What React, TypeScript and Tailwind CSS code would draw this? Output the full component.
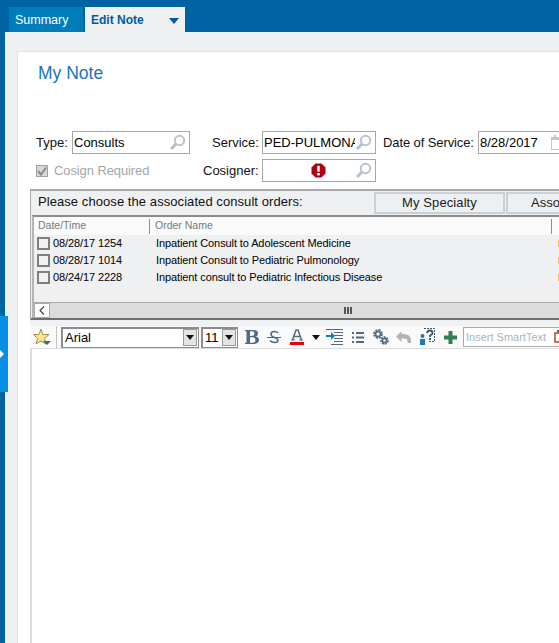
import React from "react";

const Mag = () => (
  <svg width="17" height="17" viewBox="0 0 17 17" className="shrink-0">
    <circle cx="10.5" cy="6.5" r="4.7" fill="none" stroke="#b9c4cc" strokeWidth="2" />
    <path d="M7 10 L2 15" stroke="#b4c0c9" strokeWidth="3" />
  </svg>
);

const Field = ({ w, text, icon, children }: { w: string; text?: string; icon?: boolean; children?: React.ReactNode }) => (
  <div className={`${w} h-[23px] border border-[#a8a8a8] bg-white flex items-center pl-px pr-[3px] shrink-0 overflow-hidden`}>
    <span className="flex-1 min-w-0 overflow-hidden whitespace-nowrap text-[13px] text-black">{text}</span>
    {children}
    {icon && <Mag />}
  </div>
);

const Arrow = () => (
  <div className="w-[14px] h-[17px] ml-auto mr-[1px] shrink-0 bg-[#e4e4e4] border border-[#9a9a9a] flex items-center justify-center">
    <svg width="8" height="5" viewBox="0 0 8 5"><path d="M0 0H8L4 5Z" fill="#111" /></svg>
  </div>
);

const rows = [
  ["08/28/17 1254", "Inpatient Consult to Adolescent Medicine"],
  ["08/28/17 1014", "Inpatient Consult to Pediatric Pulmonology"],
  ["08/24/17 2228", "Inpatient consult to Pediatric Infectious Disease"],
];

export default function App() {
  return (
    <div className="w-[559px] h-[643px] overflow-hidden relative bg-[#0063a3] flex flex-col font-['Liberation_Sans',Arial,sans-serif]">
      <div className="h-8 shrink-0 pt-[7px] pl-[9px] flex">
        <div className="w-[74px] bg-[#007cba] text-white text-[12.5px] leading-[15px] pl-[6px] pt-[6px]">Summary</div>
        <div className="w-[100px] ml-[2px] bg-[#eff0f2] text-[#005c99] text-[12px] leading-[15px] font-bold pl-[6px] pt-[6px] flex items-start">
          <span>Edit Note</span>
          <svg width="10" height="6" viewBox="0 0 10 6" className="ml-[25px] mt-[5px]"><path d="M0 0H10L5 6Z" fill="#005c99" /></svg>
        </div>
      </div>

      <div className="flex-1 ml-[5px] bg-[#eff0f2] pt-[19px] pl-[12px] min-h-0">
        <div className="h-[700px] w-[600px] bg-white border-t border-l border-[#e2e2e2]">
          <div className="pl-5 pt-[11px] h-[79px] text-[17.5px] leading-5 text-[#1a73b8]">My Note</div>

          <div className="flex items-center h-[23px] text-[13px] text-[#111]">
            <span className="ml-[18px] w-[36px] shrink-0">Type:</span>
            <Field w="w-[118px]" text="Consults" icon />
            <span className="ml-[22px] w-[50px] shrink-0">Service:</span>
            <Field w="w-[114px]" text="PED-PULMONARY" icon />
            <span className="ml-[7px] w-[95px] shrink-0 whitespace-nowrap tracking-[-0.1px]">Date of Service:</span>
            <Field w="w-[92px]" text="8/28/2017">
              <svg width="16" height="16" viewBox="0 0 16 16" className="shrink-0">
                <rect x="1.5" y="2.5" width="13" height="12" fill="none" stroke="#bfc8cf" />
                <rect x="1" y="2" width="14" height="3" fill="#bfc8cf" />
                <rect x="4" y="0" width="2" height="3" fill="#bfc8cf" />
                <rect x="10" y="0" width="2" height="3" fill="#bfc8cf" />
              </svg>
            </Field>
          </div>

          <div className="flex items-center h-[23px] mt-[5px] text-[13px]">
            <div className="ml-[18px] w-[12px] h-[12px] bg-[#d8d8d8] border border-[#a0a0a0] flex items-center justify-center shrink-0">
              <svg width="10" height="10" viewBox="0 0 10 10"><path d="M1 5 L4 8.5 L9 1.5" fill="none" stroke="#8a8a8a" strokeWidth="2" /></svg>
            </div>
            <span className="ml-[6px] w-[149px] shrink-0 text-[#a6a6a6] tracking-[-0.1px]">Cosign Required</span>
            <span className="w-[59px] shrink-0 text-[#111]">Cosigner:</span>
            <Field w="w-[114px]" icon>
              <svg width="15" height="15" viewBox="0 0 15 15" className="shrink-0 mr-[29px]">
                <path d="M4.5 0.5H10.5L14.5 4.5V10.5L10.5 14.5H4.5L0.5 10.5V4.5Z" fill="#b00012" />
                <rect x="6.2" y="2.8" width="2.6" height="6" rx="1" fill="#fff" />
                <rect x="6.2" y="10" width="2.6" height="2.4" fill="#fff" />
              </svg>
            </Field>
          </div>

          <div className="mt-[7px] ml-3 border-t-2 border-l border-[#a9a9a9] bg-[#eff0f2] overflow-hidden">
            <div className="h-[24px] pt-px flex items-start text-[13px] text-[#111]">
              <span className="ml-[7px] w-[336px] shrink-0 leading-[20px] tracking-[0.07px] whitespace-nowrap">Please choose the associated consult orders:</span>
              <div className="w-[131px] h-[22px] shrink-0 border-2 border-[#c9d0d6] bg-[#ecf0f3] flex items-center justify-center text-[#222] tracking-[0.1px]">My Specialty</div>
              <div className="w-[120px] h-[22px] shrink-0 ml-[1px] border-2 border-[#c9d0d6] bg-[#ecf0f3] pl-[23px] text-[#222] leading-[18px]">Associated</div>
            </div>

            <div className="ml-[1px] border-t-2 border-[#8a8a8a] border-l-2 border-l-[#b5b5b5]">
              <div className="h-[18px] bg-[#fafafa] flex items-center text-[10.5px] text-[#707b84]">
                <span className="pl-[4px] w-[115px] shrink-0">Date/Time</span>
                <span className="w-px h-[15px] bg-[#8f8f8f] shrink-0" />
                <span className="pl-[5px] w-[401px] shrink-0">Order Name</span>
                <span className="w-px h-[15px] bg-[#8f8f8f] shrink-0" />
              </div>
              <div className="h-[68px] border-b border-[#a9a9a9]">
                {rows.map(([d, n]) => (
                  <div key={d} className="h-[17px] flex items-center text-[11px] tracking-[-0.1px] text-black whitespace-nowrap">
                    <div className="ml-[3px] w-[13px] h-[13px] border-2 border-[#7f7f7f] bg-[#f1f1f1] shrink-0" />
                    <span className="ml-[3px] w-[103px] shrink-0">{d}</span>
                    <span className="w-[402px] shrink-0">{n}</span>
                    <span className="w-[4px] h-[7px] bg-[#f3c36a] shrink-0" />
                  </div>
                ))}
              </div>
              <div className="h-[15px] bg-[#dcdcdc] flex items-center">
                <div className="w-[16px] h-full bg-white border border-[#a9a9a9] flex items-center justify-center">
                  <svg width="6" height="9" viewBox="0 0 6 9"><path d="M5 0.5 L1 4.5 L5 8.5" fill="none" stroke="#444" strokeWidth="1.2" /></svg>
                </div>
                <div className="ml-[294px] flex gap-px">
                  <span className="w-[2px] h-[7px] bg-[#555]" />
                  <span className="w-[2px] h-[7px] bg-[#555]" />
                  <span className="w-[2px] h-[7px] bg-[#555]" />
                </div>
              </div>
            </div>
            <div className="h-[2px] bg-[#6f6f6f]" />
          </div>

          <div className="ml-3 h-[28px] flex items-center bg-[#fafafa] border-t-[6px] border-[#f0f1f3]">
            <svg width="18" height="18" viewBox="0 0 18 18" className="ml-[3px] shrink-0">
              <path d="M8 1 L10 6.5 L16 6.5 L11.5 10.5 L13 16 L8 13 L3 16 L4.5 10.5 L0.5 6.5 L6 6.5Z" fill="#f8e48c" stroke="#a3944f" />
              <path d="M10 13H18L14 17Z" fill="#4c6274" />
            </svg>
            <span className="ml-[5px] w-px h-[22px] bg-[#c4c4c4] shrink-0" />
            <div className="ml-[4px] w-[138px] h-[21px] shrink-0 bg-white border border-[#8c8c8c] border-l-2 border-t-2 flex items-center pl-[2px] text-[13px] text-black">
              Arial<Arrow />
            </div>
            <div className="ml-[2px] w-[37px] h-[21px] shrink-0 bg-white border border-[#8c8c8c] border-l-2 border-t-2 flex items-center pl-[2px] text-[13px] text-black">
              11<Arrow />
            </div>
            <svg width="14" height="14" viewBox="0 0 14 14" className="ml-[7px] shrink-0">
              <path d="M0 0H8Q13 0 13 3.5Q13 6 10.5 6.6Q14 7.2 14 10Q14 14 8 14H0V12.8H1.5V1.2H0ZM5 1.2V6H7Q9.5 6 9.5 3.6Q9.5 1.2 7 1.2ZM5 7.2V12.8H7.5Q10.5 12.8 10.5 10Q10.5 7.2 7.5 7.2Z" fill="#4f6a82" fillRule="evenodd" />
            </svg>
            <svg width="14" height="14" viewBox="0 0 14 14" className="ml-[8px] shrink-0">
              <path d="M0 7.5H14" stroke="#4f6a82" />
              <path d="M11 3Q10 1.5 7.5 1.5Q4 1.5 4 4Q4 6.5 7.5 7.5Q11 8.5 11 10.5Q11 12.5 7.5 12.5Q4.5 12.5 3 10.5" fill="none" stroke="#4f6a82" strokeWidth="1.5" />
            </svg>
            <svg width="14" height="16" viewBox="0 0 14 16" className="ml-[9px] shrink-0">
              <path d="M2.5 11L6 1H8L11.5 11M4 7.5H10" fill="none" stroke="#4f6a82" strokeWidth="1.5" />
              <path d="M1 11H5M9 11H13" stroke="#4f6a82" />
              <rect x="0" y="13" width="14" height="3" fill="#e8000d" />
            </svg>
            <svg width="8" height="5" viewBox="0 0 8 5" className="ml-[8px] shrink-0"><path d="M0 0H8L4 5Z" fill="#111" /></svg>
            <svg width="17" height="16" viewBox="0 0 17 16" className="ml-[6px] shrink-0">
              <path d="M0 .5H17M8 3.5H17M8 6.5H17M8 9.5H17M8 12.5H17M5 15.5H17" stroke="#4f6a82" />
              <path d="M0 6H5V3L9 7L5 11V8H0Z" fill="#1b7ab0" />
            </svg>
            <svg width="12" height="11" viewBox="0 0 12 11" className="ml-[9px] shrink-0">
              <path d="M0 0H2V2H0ZM4 0H12V2H4ZM0 4.5H2V6.5H0ZM4 4.5H12V6.5H4ZM0 9H2V11H0ZM4 9H12V11H4Z" fill="#4f6a82" />
            </svg>
            <svg width="16" height="16" viewBox="0 0 16 16" className="ml-[9px] shrink-0">
              <circle cx="5" cy="5" r="3.6" fill="none" stroke="#4f6a82" strokeWidth="2.6" strokeDasharray="2 0.8" />
              <circle cx="5" cy="5" r="2.4" fill="none" stroke="#4f6a82" strokeWidth="1.4" />
              <circle cx="11.5" cy="11.5" r="3" fill="none" stroke="#4f6a82" strokeWidth="2.6" strokeDasharray="1.8 0.8" />
              <circle cx="11.5" cy="11.5" r="2" fill="none" stroke="#4f6a82" strokeWidth="1.4" />
            </svg>
            <svg width="15" height="13" viewBox="0 0 15 13" className="ml-[7px] shrink-0">
              <path d="M0 5.5L5.5 0V3Q15 2.5 15 9V12H11.5V9.5Q11.5 7 5.5 7.5V11Z" fill="#b3b3b3" />
            </svg>
            <svg width="16" height="18" viewBox="0 0 16 18" className="ml-[8px] shrink-0">
              <path d="M5 .5H15.5V13.5H9" fill="none" stroke="#3d566b" strokeDasharray="2 1" />
              <circle cx="3.5" cy="8" r="2" fill="#1b7ab0" />
              <rect x="1" y="11" width="5" height="6" fill="#1b7ab0" />
              <path d="M8 5Q8.5 2.5 11 2.5Q13.5 2.5 13.5 5Q13.5 6.5 11 7.5V9M11 10V12" fill="none" stroke="#3d566b" strokeWidth="1.8" />
            </svg>
            <svg width="13" height="13" viewBox="0 0 13 13" className="ml-[9px] shrink-0">
              <path d="M4.5 0H8.5V4.5H13V8.5H8.5V13H4.5V8.5H0V4.5H4.5Z" fill="#2f8054" />
            </svg>
            <div className="ml-[6px] w-[110px] h-[20px] shrink-0 border border-[#a8a8a8] bg-white flex items-center pl-[2px] text-[11px] text-[#a9b3bb] whitespace-nowrap overflow-hidden">
              Insert SmartText
              <svg width="12" height="14" viewBox="0 0 12 14" className="ml-[8px] shrink-0">
                <rect x="1" y="3" width="8" height="9" fill="none" stroke="#c2401e" strokeWidth="1.5" />
                <rect x="3" y="0" width="3" height="2" fill="#2f8054" />
              </svg>
            </div>
          </div>

          <div className="ml-3 h-[320px] bg-white border border-[#dcdcdc] border-l-2" />
        </div>
      </div>

      <div className="absolute left-0 top-[316px] w-2 h-[76px] bg-[#0a8fe6] flex items-center">
        <svg width="5" height="8" viewBox="0 0 5 8"><path d="M0 0L4 4L0 8Z" fill="#fff" /></svg>
      </div>
    </div>
  );
}
